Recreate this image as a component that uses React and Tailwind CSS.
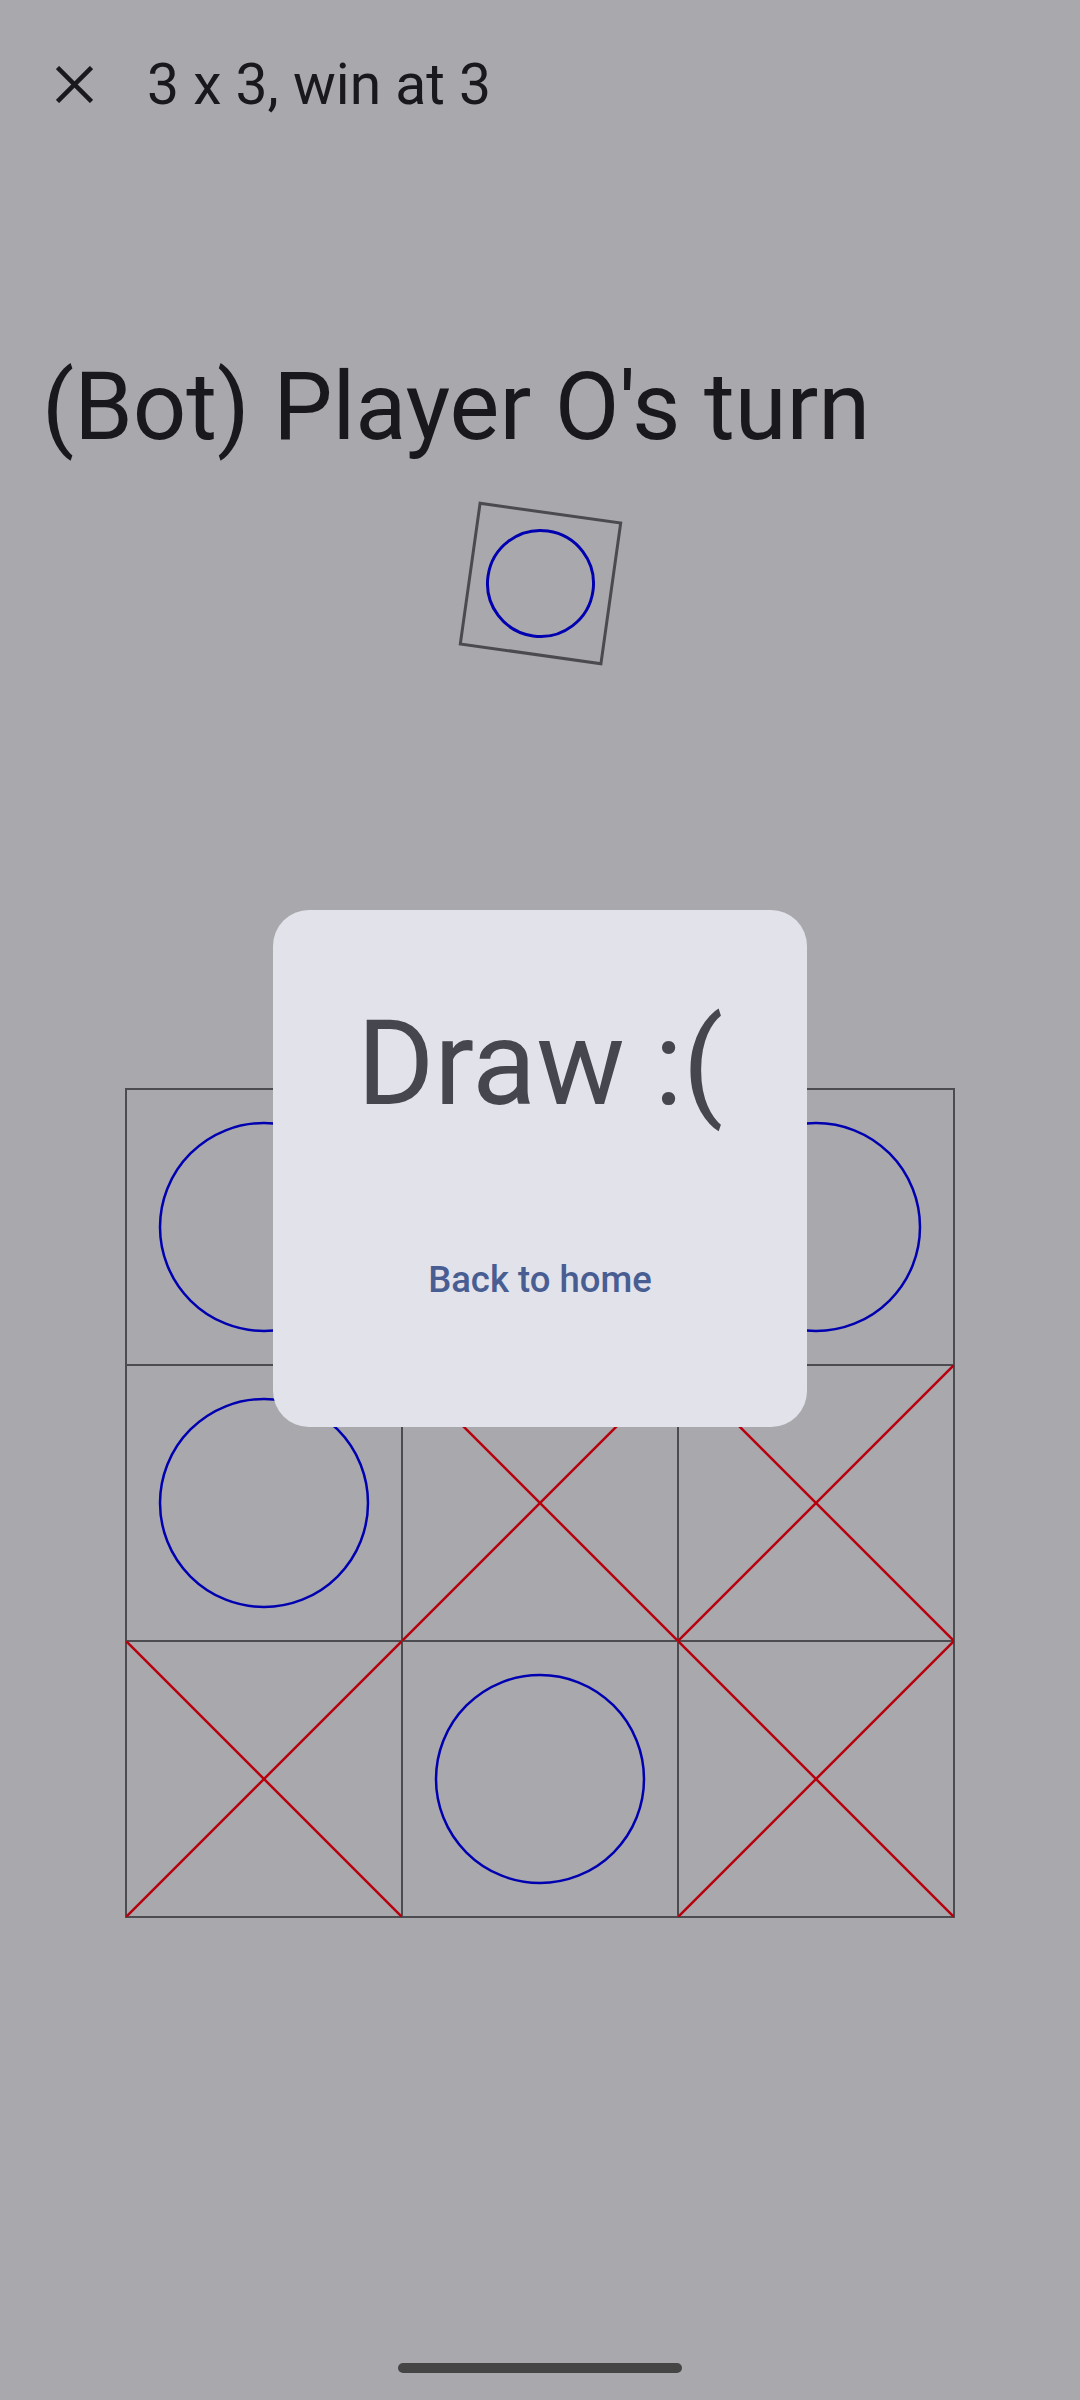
import React from 'react';

// board state: row by row
const board = [
  ['O', 'X', 'O'],
  ['O', 'X', 'X'],
  ['X', 'O', 'X'],
];

const Cross = () => (
  <svg className="absolute -inset-[1px] w-[calc(100%+2px)] h-[calc(100%+2px)]" viewBox="0 0 100 100" preserveAspectRatio="none">
    <line x1="0" y1="0" x2="100" y2="100" stroke="#b8000c" strokeWidth="0.9" />
    <line x1="100" y1="0" x2="0" y2="100" stroke="#b8000c" strokeWidth="0.9" />
  </svg>
);

const Nought = ({ r = 104, size = 276, width = 2.5 }) => (
  <svg className="absolute inset-0 w-full h-full" viewBox={`0 0 ${size} ${size}`}>
    <circle cx={size / 2} cy={size / 2} r={r} fill="none" stroke="#0000b0" strokeWidth={width} />
  </svg>
);

const Cell = ({ mark }) => (
  <div className="relative w-[276px] h-[276px] border-r-2 border-b-2 border-[#4c4c50]">
    {mark === 'X' && <Cross />}
    {mark === 'O' && <Nought size={274} />}
  </div>
);

export default function App() {
  return (
    <div className="relative w-[1080px] h-[2400px] overflow-hidden bg-[#a9a8ad] font-['Roboto',sans-serif] text-[#19181c]">
      {/* top bar */}
      <div className="flex items-center h-[168px]">
        <button className="ml-[56px] w-[37px] h-[37px] flex items-center justify-center">
          <svg width="37" height="37" viewBox="0 0 37 37">
            <line x1="1.5" y1="1.5" x2="35.5" y2="35.5" stroke="#1a1a1e" strokeWidth="4.5" />
            <line x1="35.5" y1="1.5" x2="1.5" y2="35.5" stroke="#1a1a1e" strokeWidth="4.5" />
          </svg>
        </button>
        <h1 className="ml-[54px] text-[57px] leading-[67px]">3 x 3, win at 3</h1>
      </div>

      {/* turn */}
      <div className="mt-[184px] pl-[42px] text-[94px] leading-[111px]">(Bot) Player O's turn</div>

      <div className="flex justify-center mt-[48px]">
        <div className="relative w-[145px] h-[145px] border-[3px] border-[#4b4b4f] rotate-[8deg]">
          <svg className="absolute inset-0 w-full h-full" viewBox="0 0 139 139">
            <circle cx="69.5" cy="69.5" r="53" fill="none" stroke="#0000b0" strokeWidth="3" />
          </svg>
        </div>
      </div>

      {/* board */}
      <div className="mt-[432px] ml-[125px] w-[830px] border-l-2 border-t-2 border-[#4c4c50] grid grid-cols-3">
        {board.flat().map((m, i) => (
          <Cell key={i} mark={m} />
        ))}
      </div>

      {/* home indicator */}
      <div className="mt-[445px] mx-auto w-[284px] h-[10px] rounded-full bg-[#454545]" />

      {/* result dialog */}
      <div className="absolute left-[273px] top-[910px] w-[534px] h-[517px] rounded-[36px] bg-[#e2e2eb] flex flex-col items-center">
        <div className="pt-[85px] text-[118px] leading-[138px] text-[#46464f]">Draw :(</div>
        <button className="mt-[126px] text-[36.5px] leading-[42px] font-medium text-[#485e92]">Back to home</button>
      </div>
    </div>
  );
}
